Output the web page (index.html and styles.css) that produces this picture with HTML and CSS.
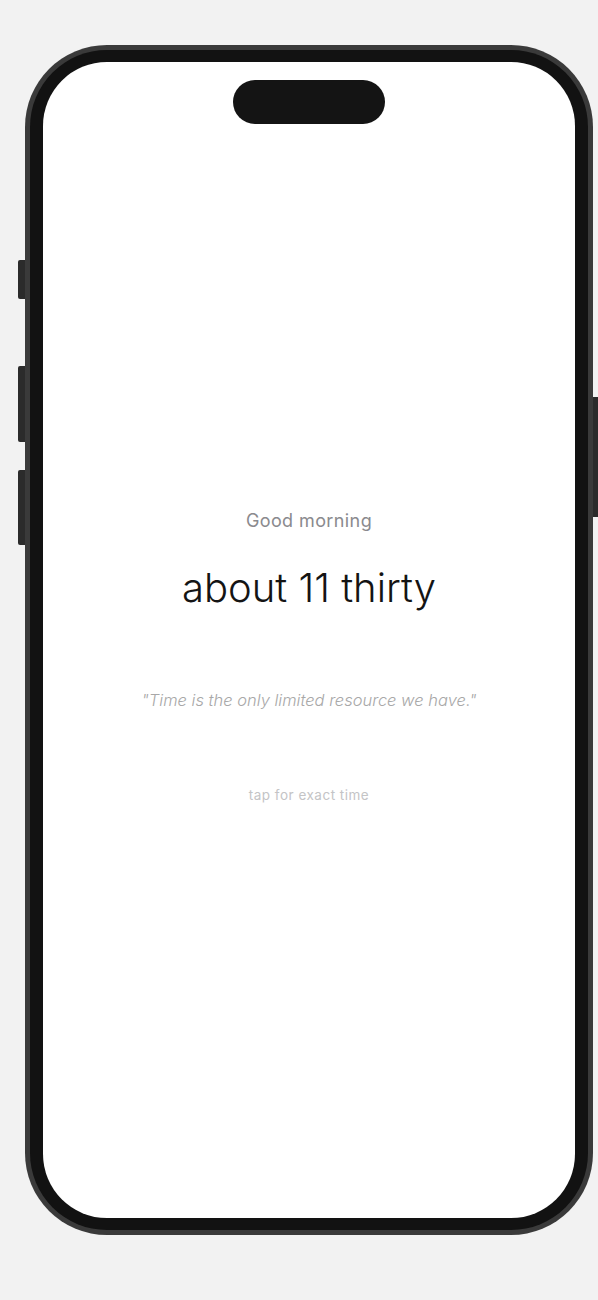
FILE: index.html
```html
<!DOCTYPE html>
<html lang="en">
<head>
<meta charset="utf-8">
<title>About time</title>
<link rel="stylesheet" href="styles.css">
</head>
<body>
  <div class="phone">
    <span class="btn btn-action"></span>
    <span class="btn btn-vol-up"></span>
    <span class="btn btn-vol-down"></span>
    <span class="btn btn-power"></span>
    <div class="bezel">
      <div class="screen">
        <div class="island"></div>
        <div class="content">
          <p class="greeting">Good morning</p>
          <h1 class="fuzzy-time">about 11 thirty</h1>
          <p class="quote">"Time is the only limited resource we have."</p>
          <p class="hint">tap for exact time</p>
        </div>
      </div>
    </div>
  </div>
</body>
</html>
```
FILE: styles.css
```css
html, body {
  margin: 0;
  padding: 0;
}
body {
  background: #f2f2f2;
  font-family: Inter, "Noto Sans", "Liberation Sans", sans-serif;
  height: 1300px;
  overflow: hidden;
}
.phone {
  position: relative;
  margin: 45px 0 0 25px;
  width: 568px;
  height: 1190px;
  box-sizing: border-box;
  padding: 5px;
  background: #3a3a3a;
  border-radius: 82px;
}
.btn {
  position: absolute;
  background: #2b2b2b;
}
.btn-action { left: -7px; top: 215px; width: 7px; height: 39px; border-radius: 2px 0 0 2px; }
.btn-vol-up { left: -7px; top: 321px; width: 7px; height: 76px; border-radius: 2px 0 0 2px; }
.btn-vol-down { left: -7px; top: 425px; width: 7px; height: 75px; border-radius: 2px 0 0 2px; }
.btn-power { right: -7px; top: 352px; width: 7px; height: 120px; border-radius: 0 2px 2px 0; }
.bezel {
  height: 100%;
  box-sizing: border-box;
  padding: 12px 13px;
  background: #121212;
  border-radius: 77px;
}
.screen {
  height: 100%;
  background: #ffffff;
  border-radius: 64px;
  display: flex;
  flex-direction: column;
  align-items: center;
  overflow: hidden;
}
.island {
  margin-top: 18px;
  width: 152px;
  height: 44px;
  border-radius: 22px;
  background: #141414;
  flex: none;
}
.content {
  margin-top: 386px;
  display: flex;
  flex-direction: column;
  align-items: center;
  text-align: center;
}
.greeting {
  margin: 0;
  font-size: 18px;
  line-height: 22px;
  letter-spacing: 0.4px;
  color: #8a8a8e;
  font-weight: 400;
}
.fuzzy-time {
  margin: 31px 0 0;
  font-size: 40px;
  line-height: 50px;
  font-weight: 300;
  color: #141414;
  letter-spacing: 0;
}
.quote {
  margin: 77px 0 0;
  font-size: 16.5px;
  line-height: 20px;
  font-style: italic;
  font-weight: 300;
  color: #a8a8a8;
}
.hint {
  margin: 77px 0 0;
  font-size: 13.5px;
  line-height: 16px;
  letter-spacing: 0.5px;
  color: #c4c4c6;
}
```
